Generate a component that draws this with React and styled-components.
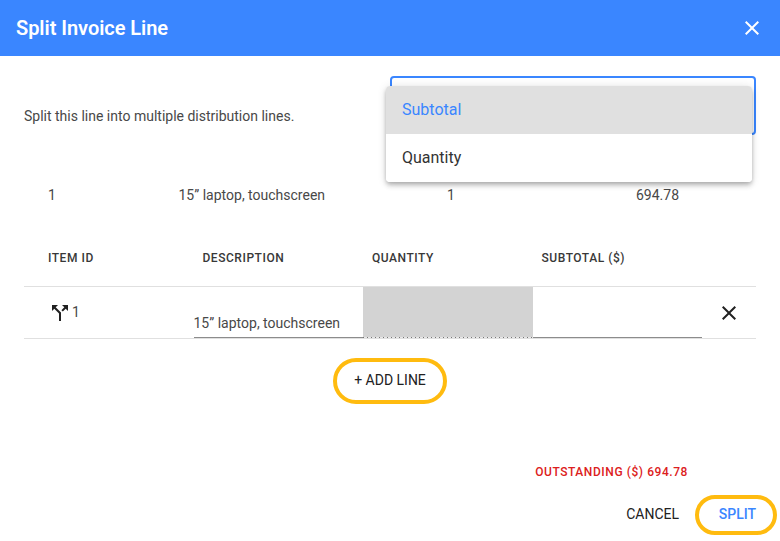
import React from 'react'
import styled, { createGlobalStyle } from 'styled-components'
import { MdClose, MdCallSplit } from 'react-icons/md'

const options = ['Subtotal', 'Quantity']

const App = () => {

  const selected = 'Subtotal'

  return (
    <Dialog>
      <GlobalStyle />

      <Header>
        <Title>Split Invoice Line</Title>
        <IconButton color='#fff'><MdClose size={24} /></IconButton>
      </Header>

      <Content>
        <TopRow>
          <Intro>Split this line into multiple distribution lines.</Intro>
          <Select>
            <Menu>
              {options.map((option) => (
                <Option key={option} $active={option === selected}>{option}</Option>
              ))}
            </Menu>
          </Select>
        </TopRow>

        <Summary>
          <span>1</span>
          <span>15” laptop, touchscreen</span>
          <span>1</span>
          <span>694.78</span>
        </Summary>

        <HeadRow>
          <HeadCell $first>Item ID</HeadCell>
          <HeadCell>Description</HeadCell>
          <HeadCell>Quantity</HeadCell>
          <HeadCell>Subtotal ($)</HeadCell>
        </HeadRow>

        <LineRow>
          <IdCell>
            <MdCallSplit size={24} />
            <span>1</span>
          </IdCell>
          <Field>15” laptop, touchscreen</Field>
          <DisabledField />
          <Field />
          <RemoveCell>
            <IconButton><MdClose size={24} /></IconButton>
          </RemoveCell>
        </LineRow>

        <AddRow>
          <Button $ringed $w={114} $h={46}>+ Add line</Button>
        </AddRow>
      </Content>

      <Outstanding>Outstanding ($) 694.78</Outstanding>

      <Actions>
        <Button>Cancel</Button>
        <Button $ringed $primary $w={82} $h={40}>Split</Button>
      </Actions>
    </Dialog>
  )
}

const GlobalStyle = createGlobalStyle`
  * { box-sizing : border-box; }

  body {
    margin : 0;
    background : #fff;
    font-family : Roboto, "Liberation Sans", sans-serif;
  }
`

const Dialog = styled.div`
  width : 780px;
  height : 541px;
  overflow : hidden;
  color : rgba(0, 0, 0, 0.87);
`

const Header = styled.header`
  display : flex;
  align-items : center;
  justify-content : space-between;
  height : 56px;
  padding : 0 16px;
  background : #3a86ff;
  color : #fff;
`

const Title = styled.h2`
  margin : 0;
  font-size : 20px;
  font-weight : 600;
  letter-spacing : -0.05px;
`

const IconButton = styled.button`
  display : flex;
  padding : 0;
  border : 0;
  background : none;
  color : ${({ color }) => color || '#212121'};
`

const Content = styled.main`
  padding : 20px 24px 0;
`

const TopRow = styled.div`
  display : flex;
  align-items : center;
  justify-content : space-between;
  height : 59px;
`

const Intro = styled.p`
  margin : 21px 0 0;
  font-size : 14px;
  line-height : 20px;
  color : #484848;
`

const Select = styled.div`
  position : relative;
  width : 366px;
  height : 59px;
  border : 2px solid #3a86ff;
  border-radius : 4px;
`

// the open list covers most of the select box
const Menu = styled.ul`
  position : absolute;
  top : 8px;
  left : -6px;
  width : 366px;
  margin : 0;
  padding : 0;
  list-style : none;
  overflow : hidden;
  background : #fff;
  border-radius : 4px;
  box-shadow : 0 2px 4px -1px rgba(0, 0, 0, 0.2), 0 4px 5px rgba(0, 0, 0, 0.14), 0 1px 10px rgba(0, 0, 0, 0.12);
`

const Option = styled.li`
  height : 48px;
  padding : 0 16px;
  font-size : 16px;
  line-height : 48px;
  color : ${({ $active }) => $active ? '#3a86ff' : '#333'};
  background : ${({ $active }) => $active ? '#e0e0e0' : '#fff'};
`

const Summary = styled.div`
  display : grid;
  grid-template-columns : 130.5px 268.5px 189px 1fr;
  margin-top : 50px;
  padding-left : 24px;
  font-size : 14px;
  line-height : 20px;
  color : #484848;
`

const Row = styled.div`
  display : grid;
  grid-template-columns : repeat(4, 169.5px) 1fr;
  border-bottom : 1px solid #e0e0e0;
`

const HeadRow = styled(Row)`
  align-items : center;
  height : 57px;
  margin-top : 25px;
`

const HeadCell = styled.div`
  padding-left : ${({ $first }) => $first ? '24px' : '9px'};
  font-size : 12px;
  font-weight : 500;
  letter-spacing : 0.54px;
  text-transform : uppercase;
  color : #383838;
`

const LineRow = styled(Row)`
  height : 52px;
`

const IdCell = styled.div`
  display : flex;
  align-items : center;
  padding-left : 24px;
  font-size : 14px;
  color : #212121;

  span {
    padding-bottom : 1px;
    color : #484848;
  }
`

const Field = styled.div`
  display : flex;
  align-items : flex-end;
  padding-bottom : 5px;
  border-bottom : 1px solid #8c8c8c;
  font-size : 14px;
  line-height : 18px;
  color : #484848;
`

const DisabledField = styled(Field)`
  border-bottom : 0;
  background-color : #d3d3d3;
  background-image : linear-gradient(to right, #777 0, #777 33%, #e8e8e8 34%);
  background-size : 4px 1px;
  background-repeat : repeat-x;
  background-position : 0 100%;
`

const RemoveCell = styled.div`
  display : flex;
  align-items : center;
  padding-left : 15px;
`

const Button = styled.button`
  width : ${({ $w }) => $w ? `${$w}px` : 'auto'};
  height : ${({ $h }) => $h ? `${$h}px` : 'auto'};
  padding : 0 0 2px ${({ $primary }) => $primary ? '3px' : '0'};
  border : ${({ $ringed }) => $ringed ? '4px solid #ffbb0f' : '0'};
  border-radius : 23px;
  background : none;
  font-family : inherit;
  font-size : 14px;
  font-weight : ${({ $primary }) => $primary ? 500 : 400};
  text-transform : uppercase;
  color : ${({ $primary }) => $primary ? '#3a86ff' : '#212121'};
`

const AddRow = styled.div`
  display : flex;
  justify-content : center;
  margin-top : 19px;
`

const Outstanding = styled.p`
  margin : 58px 92px 0 0;
  font-size : 12px;
  font-weight : 500;
  line-height : 20px;
  letter-spacing : 0.57px;
  text-align : right;
  text-transform : uppercase;
  color : #dc2020;
`

const Actions = styled.div`
  display : flex;
  align-items : center;
  justify-content : flex-end;
  gap : 16px;
  margin-top : 13px;
  padding-right : 3px;
`

export default App
